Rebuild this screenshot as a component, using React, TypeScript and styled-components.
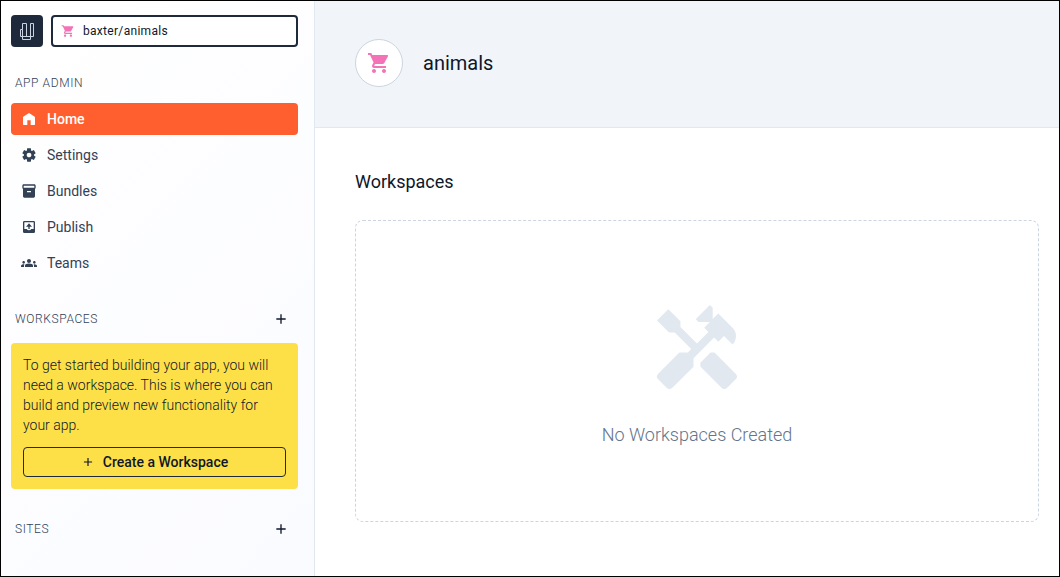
import React from 'react';
import styled, { createGlobalStyle } from 'styled-components';
import { MdShoppingCart, MdInventory2, MdGroups, MdHandyman, MdAdd } from 'react-icons/md';

const GlobalStyle = createGlobalStyle`
  *, *::before, *::after { box-sizing: border-box; }
  body {
    margin: 0;
    background: #fff;
    color: #0f172a;
    font-family: Roboto, "Liberation Sans", sans-serif;
    font-size: 14px;
    line-height: 20px;
  }
  button { font: inherit; color: inherit; cursor: pointer; }
  h1, h2, p, ul { margin: 0; padding: 0; }
`;

const Shell = styled.div`
  display: grid;
  grid-template-columns: 314px minmax(0, 1fr);
  min-height: 100vh;
  border: 1px solid #000;
`;

const Sidebar = styled.aside`
  display: flex;
  flex-direction: column;
  padding: 14px 16px 24px 10px;
  border-right: 1px solid #e2e8f0;
  background: linear-gradient(135deg, #ffffff, #fafbff);
`;

const TopBar = styled.div`
  display: flex;
  gap: 8px;
`;

const LogoLink = styled.a`
  display: grid;
  place-items: center;
  width: 32px;
  height: 32px;
  border-radius: 4px;
  background: #1e293b;
`;

const AppSwitcher = styled.button`
  display: flex;
  flex: 1;
  align-items: center;
  gap: 8px;
  padding: 0 8px;
  border: 2px solid #1e293b;
  border-radius: 4px;
  background: #fff;
  font-size: 12px;
  letter-spacing: 0.025em;
  color: #0f172a;
`;

const SectionHead = styled.div<{ $gap: number }>`
  display: flex;
  align-items: center;
  justify-content: space-between;
  height: 32px;
  margin-top: ${(p) => p.$gap}px;
  padding: 0 8px 0 4px;
`;

const SectionTitle = styled.h2`
  font-size: 12px;
  font-weight: 300;
  letter-spacing: 0.05em;
  text-transform: uppercase;
  color: #334155;
`;

const IconButton = styled.button`
  display: grid;
  place-items: center;
  padding: 0;
  width: 18px;
  height: 18px;
  border: 0;
  background: none;
`;

const NavList = styled.ul`
  display: flex;
  flex-direction: column;
  gap: 4px;
  margin-top: 4px;
  list-style: none;
`;

const NavLink = styled.a<{ $active?: boolean }>`
  display: flex;
  align-items: center;
  gap: 10px;
  height: 32px;
  padding: 0 10px;
  border-radius: 4px;
  text-decoration: none;
  font-weight: ${(p) => (p.$active ? 500 : 400)};
  color: ${(p) => (p.$active ? '#fff' : '#334155')};
  background: ${(p) => (p.$active ? '#ff5f2e' : 'transparent')};
`;

const Notice = styled.section`
  margin-top: 8px;
  padding: 12px;
  border-radius: 4px;
  background: #fde047;
  font-weight: 300;
`;

const CreateButton = styled.button`
  display: flex;
  align-items: center;
  justify-content: center;
  gap: 8px;
  width: 100%;
  height: 30px;
  margin-top: 12px;
  border: 1px solid #1e293b;
  border-radius: 4px;
  background: transparent;
  font-weight: 500;
`;

const Header = styled.header`
  display: flex;
  align-items: center;
  gap: 20px;
  height: 127px;
  padding: 0 40px 2px;
  border-bottom: 1px solid #e2e8f0;
  background: #f1f5f9;
`;

const Avatar = styled.div`
  display: grid;
  place-items: center;
  width: 48px;
  height: 48px;
  border: 1px solid #cbd5e1;
  border-radius: 50%;
  background: #fff;
`;

const AppName = styled.h1`
  font-size: 20px;
  line-height: 28px;
  font-weight: 400;
`;

const Content = styled.section`
  padding: 40px 20px 40px 40px;
`;

const ContentTitle = styled.h2`
  font-size: 18px;
  line-height: 28px;
  font-weight: 400;
`;

const EmptyState = styled.div`
  display: flex;
  flex-direction: column;
  align-items: center;
  justify-content: center;
  gap: 24px;
  min-height: 302px;
  margin-top: 24px;
  padding-top: 8px;
  border: 1px dashed #cbd5e1;
  border-radius: 8px;
  color: #e2e8f0;
`;

const EmptyText = styled.p`
  font-size: 18px;
  line-height: 28px;
  font-weight: 300;
  color: #64748b;
`;

const Glyph = ({ d }: { d: string }) => (
  <svg width="16" height="16" viewBox="0 0 24 24" fill="currentColor" fillRule="evenodd" aria-hidden="true">
    <path d={d} />
  </svg>
);

const homePath = 'M3 20V9.500q0-.5.4-.8L11.400 3.200q.6-.4 1.200 0L20.600 8.700q.4.3.4.8V20q0 1-1 1h-5.500v-7h-5v7H4q-1 0-1-1z';

const gearPath =
  'm9.25 22-.4-3.2q-.325-.125-.612-.3-.288-.175-.563-.375L4.7 19.375l-2.75-4.75 2.575-1.95Q4.5 12.5 4.5 12.337v-.675q0-.162.025-.337L1.95 9.375l2.75-4.75 2.975 1.25q.275-.2.575-.375.3-.175.6-.3L9.25 2h5.5l.4 3.2q.325.125.612.3.288.175.563.375l2.975-1.25 2.75 4.75-2.575 1.95q.025.175.025.337v.675q0 .163-.05.338l2.575 1.95-2.75 4.75-2.95-1.25q-.275.2-.575.375-.3.175-.6.3L14.75 22Zm2.8-6.5q1.45 0 2.475-1.025Q15.55 13.45 15.55 12q0-1.45-1.025-2.475Q13.5 8.500 12.050 8.500q-1.475 0-2.488 1.025Q8.550 10.550 8.550 12q0 1.450 1.012 2.475Q10.575 15.500 12.050 15.500Z';

const outboxPath =
  'M5 3h14q2 0 2 2v14q0 2-2 2H5q-2 0-2-2V5q0-2 2-2z M5 5v10h3.500q1.500 2 3.500 2t3.500-2H19V5z M11 15v-3.500H7.500L12 6.500l4.500 5H13V15z';

const Logo = () => (
  <svg width="18" height="20" viewBox="0 0 18 20" fill="none" stroke="#cbd5e1" aria-hidden="true">
    <path d="M4.500 8.500v-6h4v13M4.500 8.500h-2v7h13v-13h-3v13M4.500 8.500v10h8v-3" />
  </svg>
);

const navItems = [
  { label: 'Home', icon: <Glyph d={homePath} />, active: true },
  { label: 'Settings', icon: <Glyph d={gearPath} /> },
  { label: 'Bundles', icon: <MdInventory2 size={16} /> },
  { label: 'Publish', icon: <Glyph d={outboxPath} /> },
  { label: 'Teams', icon: <MdGroups size={16} /> },
];

export default function App() {
  return (
    <>
      <GlobalStyle />
      <Shell>
        <Sidebar>
          <TopBar>
            <LogoLink href="#" aria-label="Dashboard"><Logo /></LogoLink>
            <AppSwitcher type="button">
              <MdShoppingCart size={14} color="#f472b6" />
              baxter/animals
            </AppSwitcher>
          </TopBar>
          <nav>
            <SectionHead $gap={20}><SectionTitle>App Admin</SectionTitle></SectionHead>
            <NavList>
              {navItems.map((item) => (
                <li key={item.label}>
                  <NavLink href="#" $active={item.active}>{item.icon}{item.label}</NavLink>
                </li>
              ))}
            </NavList>
          </nav>
          <SectionHead $gap={24}>
            <SectionTitle>Workspaces</SectionTitle>
            <IconButton type="button" aria-label="Add workspace"><MdAdd size={16} /></IconButton>
          </SectionHead>
          <Notice>
            <p>
              To get started building your app, you will need a workspace. This is where you can
              build and preview new functionality for your app.
            </p>
            <CreateButton type="button"><MdAdd size={14} />Create a Workspace</CreateButton>
          </Notice>
          <SectionHead $gap={24}>
            <SectionTitle>Sites</SectionTitle>
            <IconButton type="button" aria-label="Add site"><MdAdd size={16} /></IconButton>
          </SectionHead>
        </Sidebar>
        <main>
          <Header>
            <Avatar><MdShoppingCart size={24} color="#f472b6" /></Avatar>
            <AppName>animals</AppName>
          </Header>
          <Content>
            <ContentTitle>Workspaces</ContentTitle>
            <EmptyState>
              <MdHandyman size={96} />
              <EmptyText>No Workspaces Created</EmptyText>
            </EmptyState>
          </Content>
        </main>
      </Shell>
    </>
  );
}
